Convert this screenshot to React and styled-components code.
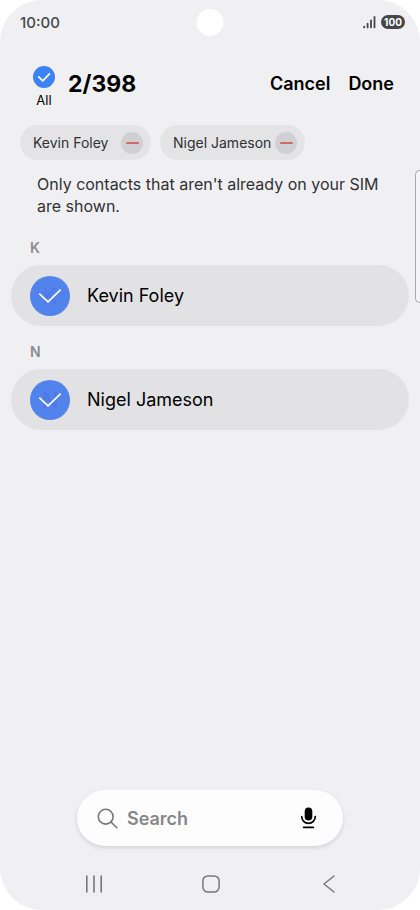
import { useState } from "react";
import styled, { createGlobalStyle } from "styled-components";

const GlobalStyle = createGlobalStyle`
* {
box-sizing: border-box;
}

body {
margin: 0;
background: #ffffff;
font-family: Inter, "Liberation Sans", sans-serif;
color: #000000;
}

button, input {
font-family: inherit;
}

button {
padding: 0;
border: none;
background: none;
color: inherit;
cursor: pointer;
}

p, h1, h2, ul {
margin: 0;
padding: 0;
}
`;

const Screen = styled.div`
position: relative;
min-height: 100vh;
display: flex;
flex-direction: column;
background: #f0f0f3;
border-radius: 42px;
overflow: hidden;
`;

const StatusBar = styled.div`
height: 44px;
padding: 0 15px 0 20px;
display: flex;
align-items: center;
justify-content: space-between;
`;

const Clock = styled.span`
font-size: 15px;
font-weight: 500;
color: #47474a;
`;

const StatusIcons = styled.div`
display: flex;
align-items: center;
gap: 5px;
`;

const Battery = styled.span`
width: 24px;
height: 14px;
border-radius: 7px;
display: flex;
align-items: center;
justify-content: center;
background: #47474a;
color: #ffffff;
font-size: 10px;
font-weight: 700;
`;

const Camera = styled.div`
position: absolute;
top: 9px;
left: 50%;
width: 27px;
height: 27px;
border-radius: 50%;
background: #ffffff;
transform: translateX(-50%);
`;

const EdgeHandle = styled.div`
position: absolute;
top: 170px;
right: 0;
width: 5px;
height: 133px;
border: 1px solid #a9a9ac;
border-right: none;
border-radius: 5px 0 0 5px;
background: #f5f5f7;
`;

const Header = styled.header`
padding: 22px 26px 0 32px;
height: 72px;
display: flex;
align-items: flex-start;
`;

const SelectAll = styled.label`
width: 24px;
display: flex;
flex-direction: column;
align-items: center;
gap: 4px;
font-size: 13px;
line-height: 16px;
`;

const CheckBox = styled.span`
display: grid;
width: ${(props) => props.$size}px;
height: ${(props) => props.$size}px;
flex-shrink: 0;

& > * {
grid-area: 1 / 1;
}
`;

const CheckInput = styled.input`
appearance: none;
width: 100%;
height: 100%;
margin: 0;
border-radius: 50%;
background: #c9c9cc;

&:checked {
background: ${(props) => props.$color};
}
`;

const Initial = styled.span`
place-self: center;
font-size: 22px;
color: #4b78e6;
pointer-events: none;
`;

const CheckMark = styled.svg`
width: 100%;
height: 100%;
fill: none;
stroke: #ffffff;
stroke-linecap: round;
stroke-linejoin: round;
pointer-events: none;
`;

const Title = styled.h1`
margin-left: 12px;
flex: 1;
font-size: 23px;
line-height: 36px;
font-weight: 700;
`;

const Actions = styled.div`
display: flex;
gap: 18px;
`;

const ActionButton = styled.button`
font-size: 18px;
line-height: 36px;
font-weight: 600;
`;

const Chips = styled.ul`
padding: 9px 20px 0;
display: flex;
gap: 9px;
list-style: none;
`;

const Chip = styled.li`
min-width: 131px;
height: 35px;
padding: 0 8px 0 13px;
border-radius: 18px;
display: flex;
align-items: center;
justify-content: space-between;
gap: 4px;
background: #e4e4e6;
color: #303033;
font-size: 14px;
white-space: nowrap;
`;

const RemoveButton = styled.button`
width: 22px;
height: 22px;
border-radius: 50%;
display: flex;
align-items: center;
justify-content: center;
background: #d0d0d3;

&::before {
content: "";
width: 13px;
height: 2px;
border-radius: 1px;
background: #cf6a64;
}
`;

const Notice = styled.p`
padding: 13px 37px 5px;
font-size: 16px;
line-height: 22px;
color: #303033;
`;

const Group = styled.section`
padding: 0 11px;
`;

const GroupLabel = styled.h2`
height: 43px;
padding: 17px 19px 0;
font-size: 14px;
line-height: 18px;
font-weight: 600;
color: #8b8b8e;
`;

const ContactRow = styled.label`
height: 61px;
padding: 0 19px;
border-radius: 31px;
display: flex;
align-items: center;
gap: 17px;
background: #e2e2e4;
font-size: 18px;
`;

const Footer = styled.footer`
margin-top: auto;
`;

const SearchBar = styled.div`
margin: 0 77px;
height: 56px;
padding: 0 24px 0 20px;
border-radius: 28px;
display: flex;
align-items: center;
gap: 9px;
background: #fdfdfe;
box-shadow: 0 2px 4px rgba(0, 0, 0, 0.12);
`;

const SearchInput = styled.input`
flex: 1;
min-width: 0;
padding: 0;
border: none;
outline: none;
background: none;
font-size: 18px;
font-weight: 600;

&::placeholder {
color: #87878a;
opacity: 1;
}
`;

const IconButton = styled.button`
display: flex;
`;

const NavBar = styled.nav`
height: 64px;
padding: 11px 79px 0 81px;
display: flex;
align-items: center;
justify-content: space-between;
`;

const contacts = [
  { id: 1, name: "Kevin Foley" },
  { id: 2, name: "Nigel Jameson" },
];

const TOTAL = 398;

const App = () => {
  const [selected, setSelected] = useState([1, 2]);
  const [keyword, setKeyword] = useState("");

  const toggle = (id) => {
    setSelected((ary) =>
      ary.includes(id) ? ary.filter((v) => v !== id) : [...ary, id]
    );
  };

  const toggleAll = (e) => {
    setSelected(e.target.checked ? contacts.map((c) => c.id) : []);
  };

  return (
    <>
      <GlobalStyle />
      <Screen>
        <StatusBar>
          <Clock>10:00</Clock>
          <StatusIcons>
            <svg width="13" height="14" viewBox="0 0 13 14" fill="none" stroke="#47474a" strokeWidth="1.8" strokeLinecap="round">
              <path d="M1.2 11.6v.8M4.6 8.6v3.8M8 5.4v7M11.5 2v10.4" />
            </svg>
            <Battery>100</Battery>
          </StatusIcons>
        </StatusBar>
        <Camera />

        <Header>
          <SelectAll>
            <CheckBox $size={22}>
              <CheckInput
                type="checkbox"
                $color="#3b82f6"
                checked={selected.length === contacts.length}
                onChange={toggleAll}
              />
              <CheckMark viewBox="0 0 22 22" strokeWidth="1.7">
                <path d="M5.7 10.8l4 4 6.8-6.9" />
              </CheckMark>
            </CheckBox>
            All
          </SelectAll>
          <Title>{selected.length}/{TOTAL}</Title>
          <Actions>
            <ActionButton type="button" onClick={() => setSelected([])}>Cancel</ActionButton>
            <ActionButton type="button">Done</ActionButton>
          </Actions>
        </Header>

        <Chips>
          {contacts.filter((c) => selected.includes(c.id)).map((c) => (
            <Chip key={c.id}>
              {c.name}
              <RemoveButton type="button" aria-label={`Remove ${c.name}`} onClick={() => toggle(c.id)} />
            </Chip>
          ))}
        </Chips>

        <Notice>Only contacts that aren't already on your SIM are shown.</Notice>

        <main>
          {contacts.map((c) => (
            <Group key={c.id}>
              <GroupLabel>{c.name[0]}</GroupLabel>
              <ContactRow>
                <CheckBox $size={40}>
                  <CheckInput
                    type="checkbox"
                    $color="#5283ec"
                    checked={selected.includes(c.id)}
                    onChange={() => toggle(c.id)}
                  />
                  <Initial aria-hidden="true">{c.name[0]}</Initial>
                  <CheckMark viewBox="0 0 40 40" strokeWidth="1.7">
                    <path d="M9.8 18.2l8.2 7.6 12.2-11.6" />
                  </CheckMark>
                </CheckBox>
                {c.name}
              </ContactRow>
            </Group>
          ))}
        </main>

        <Footer>
          <SearchBar>
            <svg width="21" height="21" viewBox="0 0 21 21" fill="none" stroke="#77777a" strokeWidth="1.6" strokeLinecap="round">
              <circle cx="8.7" cy="8.7" r="7.4" />
              <path d="M14 14l5.8 5.8" />
            </svg>
            <SearchInput
              type="text"
              aria-label="Search"
              placeholder="Search"
              value={keyword}
              onChange={(e) => setKeyword(e.target.value)}
            />
            <IconButton type="button" aria-label="Voice search">
              <svg width="21" height="22" viewBox="0 0 21 22" fill="none" stroke="#000000" strokeWidth="1.7" strokeLinecap="round">
                <rect x="6.7" y="0.6" width="7.6" height="13" rx="3.8" fill="#000000" stroke="none" />
                <path d="M3.7 9.6a6.8 6.8 0 0 0 13.6 0M5.6 20.4h9.8" />
              </svg>
            </IconButton>
          </SearchBar>
          <NavBar>
            <IconButton type="button" aria-label="Recent apps">
              <svg width="24" height="20" viewBox="0 0 24 20" fill="none" stroke="#77777a" strokeWidth="1.6" strokeLinecap="round">
                <path d="M5.8 2v16M13 2v16M20.2 2v16" />
              </svg>
            </IconButton>
            <IconButton type="button" aria-label="Home">
              <svg width="20" height="20" viewBox="0 0 20 20" fill="none" stroke="#77777a" strokeWidth="1.5">
                <rect x="1.9" y="1.9" width="16.2" height="16.2" rx="5" />
              </svg>
            </IconButton>
            <IconButton type="button" aria-label="Back">
              <svg width="24" height="20" viewBox="0 0 24 20" fill="none" stroke="#77777a" strokeWidth="1.5" strokeLinecap="round" strokeLinejoin="round">
                <path d="M17 2L7 10l10 8" />
              </svg>
            </IconButton>
          </NavBar>
        </Footer>
        <EdgeHandle />
      </Screen>
    </>
  );
};

export default App;
